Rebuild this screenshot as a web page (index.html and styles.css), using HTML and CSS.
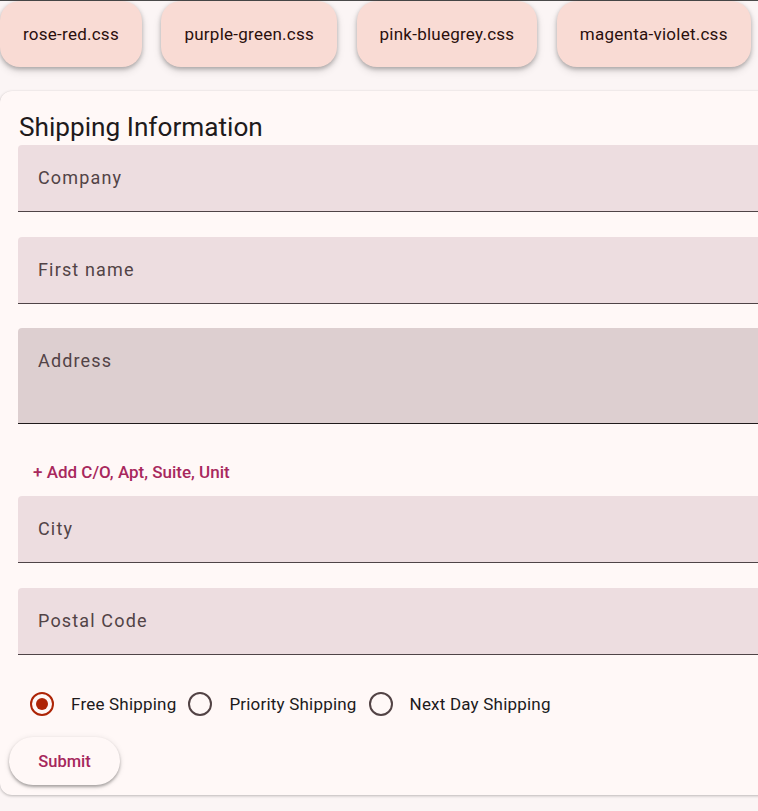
FILE: index.html
```html
<!DOCTYPE html>
<html lang="en">
<head>
<meta charset="utf-8">
<title>Shipping Information</title>
<link rel="stylesheet" href="styles.css">
</head>
<body>
<div class="topline"></div>
<nav class="themes">
  <button class="theme-btn">rose-red.css</button>
  <button class="theme-btn">purple-green.css</button>
  <button class="theme-btn">pink-bluegrey.css</button>
  <button class="theme-btn">magenta-violet.css</button>
</nav>
<form class="card">
  <h2 class="card-title">Shipping Information</h2>
  <div class="field"><span class="field-label">Company</span></div>
  <div class="field field-second"><span class="field-label">First name</span></div>
  <div class="field field-tall field-hover"><span class="field-label">Address</span></div>
  <div class="link-row"><a class="add-link">+ Add C/O, Apt, Suite, Unit</a></div>
  <div class="field"><span class="field-label">City</span></div>
  <div class="field"><span class="field-label">Postal Code</span></div>
  <div class="radios">
    <label class="radio-item"><span class="radio radio-on"><span class="dot"></span></span><span class="radio-label">Free Shipping</span></label>
    <label class="radio-item"><span class="radio"></span><span class="radio-label">Priority Shipping</span></label>
    <label class="radio-item"><span class="radio"></span><span class="radio-label">Next Day Shipping</span></label>
  </div>
  <button type="button" class="submit">Submit</button>
</form>
</body>
</html>
```
FILE: styles.css
```css
html, body {
  margin: 0;
  padding: 0;
  overflow: hidden;
}
body {
  background: #fbf5f5;
  font-family: Roboto, "Liberation Sans", sans-serif;
  width: 758px;
  height: 811px;
}
.topline {
  height: 1px;
  background: #4a4a4a;
}
.themes {
  display: flex;
  gap: 19.5px;
}
.theme-btn {
  height: 66px;
  padding: 0 23px;
  border: none;
  border-radius: 20px;
  background: #f9dbd4;
  color: #2a0f0d;
  font-family: Roboto, sans-serif;
  font-size: 17px;
  letter-spacing: 0.25px;
  font-weight: 400;
  box-shadow: 0 2px 4px rgba(0,0,0,0.25), 0 4px 8px rgba(0,0,0,0.12);
}
.card {
  margin-top: 24px;
  width: 960px;
  box-sizing: border-box;
  background: #fff8f7;
  border-radius: 12px;
  padding: 18px 0 10px 18px;
  box-shadow: 0 1px 3px rgba(0,0,0,0.25), 0 0 1px rgba(0,0,0,0.08);
}
.card-title {
  margin: 0;
  font-size: 26.2px;
  font-weight: 400;
  line-height: 36px;
  color: #201a1b;
  padding-left: 1px;
}
.field {
  height: 66px;
  box-sizing: content-box;
  background: #eddde0;
  border-bottom: 1px solid #4f4447;
  border-radius: 4px 4px 0 0;
  padding: 0 20px;
  margin-bottom: 25px;
}
.field-second {
  margin-bottom: 24px;
}
.field-tall {
  height: 95px;
  margin-bottom: 0;
}
.field-hover {
  background: #ddcfd0;
  border-bottom-color: #1f1a1b;
}
.field-label {
  display: block;
  padding-top: 21px;
  font-size: 18px;
  line-height: 24px;
  letter-spacing: 1.15px;
  color: #524346;
}
.link-row {
  padding: 36px 0 11px 15px;
  line-height: 24px;
}
.add-link {
  font-size: 17px;
  font-weight: 500;
  color: #a8285d;
}
.radios {
  display: flex;
  align-items: center;
  height: 48px;
  margin-left: 4px;
}
.radio-item {
  display: flex;
  align-items: center;
  margin-right: 4px;
}
.radio {
  width: 40px;
  height: 40px;
  display: flex;
  align-items: center;
  justify-content: center;
  position: relative;
}
.radio::before {
  content: "";
  width: 20px;
  height: 20px;
  border: 2px solid #524345;
  border-radius: 50%;
}
.radio-on::before {
  border-color: #ad2406;
}
.dot {
  position: absolute;
  width: 12px;
  height: 12px;
  border-radius: 50%;
  background: #ad2406;
  left: 14px;
  top: 14px;
}
.radio-label {
  margin-left: 9px;
  font-size: 17px;
  color: #201a1b;
  letter-spacing: 0.2px;
}
.submit {
  margin: 9px 0 0 -9px;
  height: 48px;
  width: 111px;
  border: none;
  border-radius: 24px;
  background: #fff8f7;
  color: #a6275c;
  font-family: Roboto, sans-serif;
  font-size: 16.5px;
  font-weight: 500;
  box-shadow: 0 2px 3px rgba(0,0,0,0.3), 0 1px 6px rgba(0,0,0,0.1);
}
```
